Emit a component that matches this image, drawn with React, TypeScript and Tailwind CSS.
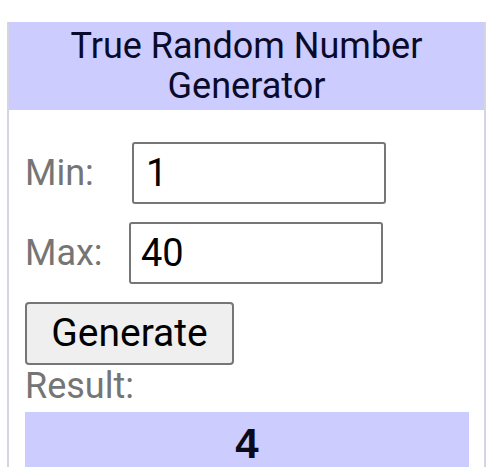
export default function App() {
  return (
    <div className="w-[491px] h-[467px] overflow-hidden bg-white pt-[22px] pl-[7px] font-['Roboto',sans-serif]">
      <div className="w-[479px] h-[460px] border-2 border-b-0 border-[#d4d4e4]">
        <div className="bg-[#ccccff] h-[88px] -mt-[2px] flex items-center justify-center text-center text-[36px] leading-[40px] text-[#0a0a2a]">
          <div>
            True Random Number
            <br />
            Generator
          </div>
        </div>
        <div className="pl-[16px] pr-[15px] pt-[32px]">
          <div className="flex items-center">
            <span className="w-[107px] text-[36px] text-[#757575]">Min:</span>
            <div className="w-[254px] h-[62px] border-2 border-[#767676] rounded-[3px] flex items-center pl-[12px] text-[38px] text-black">
              1
            </div>
          </div>
          <div className="flex items-center mt-[18px]">
            <span className="w-[104px] text-[36px] text-[#757575]">Max:</span>
            <div className="w-[254px] h-[62px] border-2 border-[#767676] rounded-[3px] flex items-center pl-[10px] text-[38px] text-black">
              40
            </div>
          </div>
          <button className="mt-[18px] w-[209px] h-[63px] bg-[#efefef] border-2 border-[#767676] rounded-[4px] text-[39px] text-black">
            Generate
          </button>
          <div className="text-[36px] leading-[38px] text-[#757575] mt-[2px]">Result:</div>
          <div className="mt-[7px] bg-[#ccccff] h-[70px] pt-[8px] text-center font-['Liberation_Sans',sans-serif] font-bold text-[42px] leading-[48px] text-[#0a0a1a]">
            4
          </div>
        </div>
      </div>
    </div>
  );
}
